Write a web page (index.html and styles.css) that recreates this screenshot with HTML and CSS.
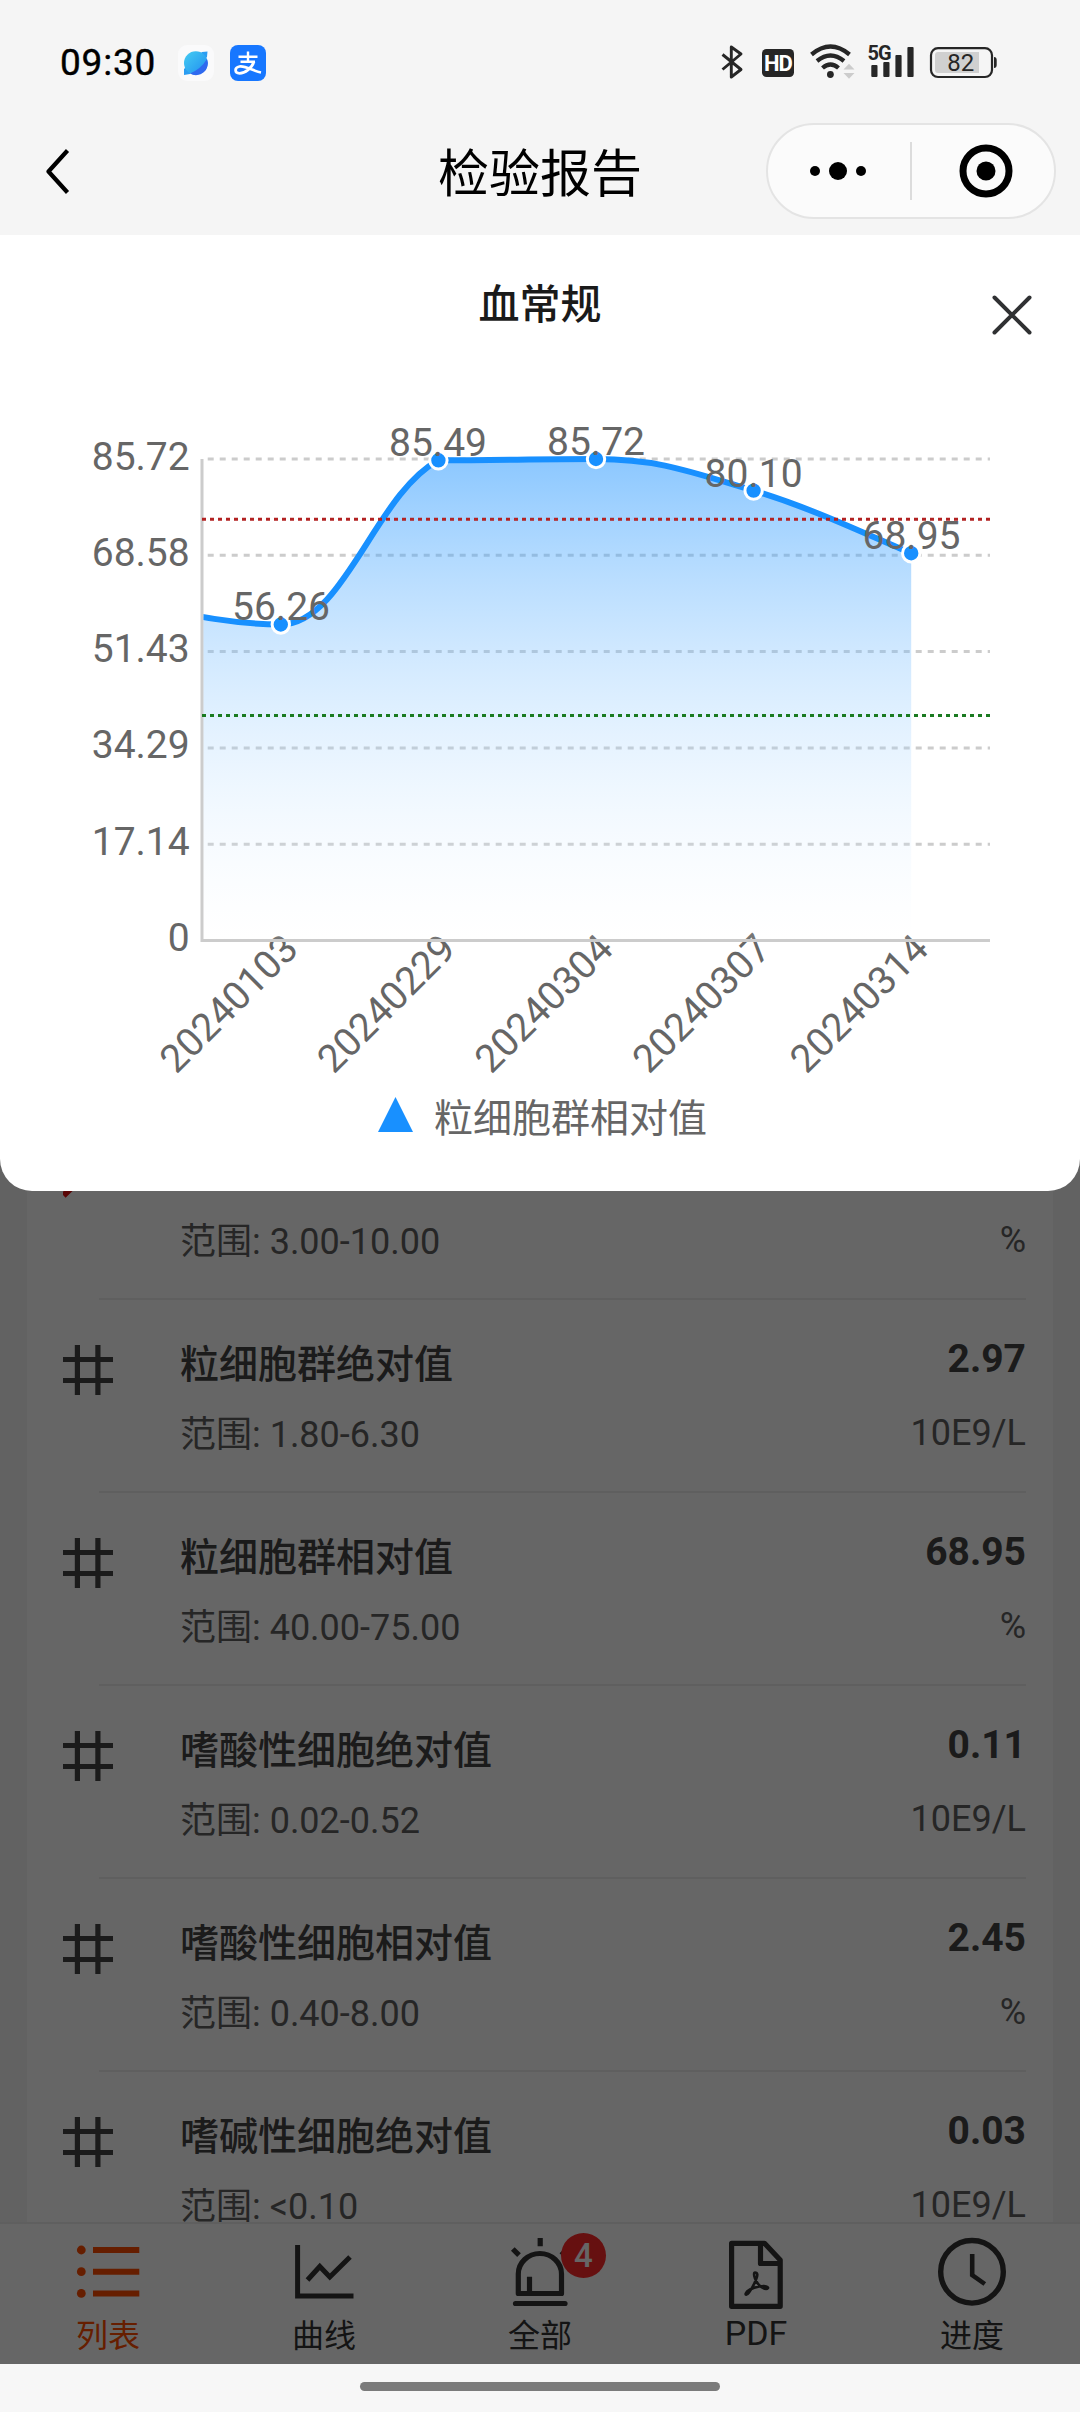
FILE: index.html
```html
<!DOCTYPE html>
<html lang="zh-CN">
<head>
<meta charset="utf-8">
<title>检验报告</title>
<link rel="stylesheet" href="styles.css">
</head>
<body>
<svg class="defs" width="0" height="0" aria-hidden="true">
  <symbol id="hash" viewBox="0 0 50 50"><path d="M14.4 0V50M34.9 0V50M0 14.5H50M0 35.5H50" fill="none" stroke="currentColor" stroke-width="5.2"/></symbol>
</svg>
<div class="screen">
  <header class="statusbar">
    <div class="status-left">
      <span class="clock">09:30</span>
      <svg class="app-icon" width="36" height="36" viewBox="0 0 36 36">
        <defs>
          <linearGradient id="planet" x1="0" y1="0" x2="1" y2="1"><stop offset="0" stop-color="#45cdf2"/><stop offset="1" stop-color="#1f8cf0"/></linearGradient>
        </defs>
        <rect width="36" height="36" rx="9" fill="#fafafb"/>
        <path d="M6 30 L6 24 L24 7 L29.500 6.500 L29 12 L12 29 Z" fill="#2b9df2"/>
        <circle cx="17.800" cy="18" r="11.800" fill="url(#planet)"/>
        <path d="M29 14 A11.800 11.800 0 0 1 12 28.500 Q23 24 29 14Z" fill="#2f69ef"/>
      </svg>
      <svg class="app-icon" width="36" height="36" viewBox="0 0 36 36">
        <rect width="36" height="36" rx="8" fill="#1777ff"/>
        <g fill="none" stroke="#fff">
          <path d="M8.500 11.800H27.500M18 6.500V16.500M10.500 16.800H25" stroke-width="2.400"/>
          <path d="M24 16.500C22 23 15 28.300 9.500 28.300C4.500 28.300 4 22.500 9.500 21.500C15.500 20.500 23 26 31 27.500" stroke-width="2.700"/>
        </g>
      </svg>
    </div>
    <svg class="status-icons" width="280" height="40" viewBox="720 42 280 40">
      <g fill="none" stroke="#262626">
        <path d="M722.500 54.500L741 69.500L731.300 77V47L741 54L722.500 69.500" stroke-width="2.900" stroke-linejoin="round"/>
        <path d="M811.500 54.500Q830.500 38.500 849.500 54.500M817 61Q830.500 50 844 61M822.500 68Q830.500 61 838.500 68" stroke-width="4.300"/>
        <rect x="931" y="48.200" width="61" height="28.800" rx="7" stroke-width="2.200"/>
      </g>
      <rect x="762" y="49" width="32" height="28" rx="4.500" fill="#262626"/>
      <text class="t-hd" x="778" y="70.500">HD</text>
      <circle cx="830.400" cy="74.500" r="3.400" fill="#262626"/>
      <path d="M843.500 69.500L849 63.800L854.500 69.500ZM843.500 73L849 78.700L854.500 73Z" fill="#cccccc"/>
      <text class="t-5g" x="879" y="60">5G</text>
      <g fill="#262626">
        <rect x="871.300" y="65" width="6.200" height="12" rx="1"/>
        <rect x="883.300" y="62" width="6.200" height="15" rx="1"/>
        <rect x="895.400" y="55" width="6.200" height="22" rx="1"/>
        <rect x="907.400" y="47" width="6.200" height="30" rx="1"/>
        <path d="M994 57Q996.700 57 996.700 60V65Q996.700 68 994 68Z"/>
      </g>
      <path d="M938 52H979V73H938Q935 73 935 70V55Q935 52 938 52Z" fill="#d0d0d0"/>
      <text class="t-batt" x="960.800" y="71">82</text>
    </svg>
  </header>
  <nav class="navbar">
    <svg class="back" width="24" height="46" viewBox="0 0 24 46"><path d="M21.500 1.500L2.500 22.500L21.500 43.500" fill="none" stroke="#000" stroke-width="4.200" stroke-linejoin="round"/></svg>
    <h1 class="nav-title">检验报告</h1>
    <div class="capsule">
      <svg width="56" height="20" viewBox="0 0 56 20"><circle cx="5" cy="10" r="5"/><circle cx="28" cy="10" r="9"/><circle cx="51" cy="10" r="5"/></svg>
      <span class="capsule-line"></span>
      <svg width="54" height="54" viewBox="0 0 54 54"><circle cx="27" cy="27" r="23" fill="none" stroke="#000" stroke-width="7"/><circle cx="27" cy="27" r="9.500"/></svg>
    </div>
  </nav>

  <div class="page">
    <main class="report">
      <ul class="card">
        <li class="row">
          <svg class="row-icon" width="50" height="50" viewBox="0 0 50 50"><path d="M0.500 43.500L30 15" fill="none" stroke="#e01010" stroke-width="6"/></svg>
          <div class="row-main"><span class="name"></span><span class="range">范围: 3.00-10.00</span></div>
          <div class="row-value"><span class="value"></span><span class="unit">%</span></div>
        </li>
        <li class="row">
          <svg class="row-icon" width="50" height="50"><use href="#hash"/></svg>
          <div class="row-main"><span class="name">粒细胞群绝对值</span><span class="range">范围: 1.80-6.30</span></div>
          <div class="row-value"><span class="value">2.97</span><span class="unit">10E9/L</span></div>
        </li>
        <li class="row">
          <svg class="row-icon" width="50" height="50"><use href="#hash"/></svg>
          <div class="row-main"><span class="name">粒细胞群相对值</span><span class="range">范围: 40.00-75.00</span></div>
          <div class="row-value"><span class="value">68.95</span><span class="unit">%</span></div>
        </li>
        <li class="row">
          <svg class="row-icon" width="50" height="50"><use href="#hash"/></svg>
          <div class="row-main"><span class="name">嗜酸性细胞绝对值</span><span class="range">范围: 0.02-0.52</span></div>
          <div class="row-value"><span class="value">0.11</span><span class="unit">10E9/L</span></div>
        </li>
        <li class="row">
          <svg class="row-icon" width="50" height="50"><use href="#hash"/></svg>
          <div class="row-main"><span class="name">嗜酸性细胞相对值</span><span class="range">范围: 0.40-8.00</span></div>
          <div class="row-value"><span class="value">2.45</span><span class="unit">%</span></div>
        </li>
        <li class="row">
          <svg class="row-icon" width="50" height="50"><use href="#hash"/></svg>
          <div class="row-main"><span class="name">嗜碱性细胞绝对值</span><span class="range">范围: &lt;0.10</span></div>
          <div class="row-value"><span class="value">0.03</span><span class="unit">10E9/L</span></div>
        </li>
      </ul>
    </main>

    <footer class="tabbar">
      <div class="tab active">
        <svg class="tab-icon" width="80" height="76" viewBox="68 2234 80 76"><g fill="currentColor"><circle cx="81.300" cy="2250" r="4.400"/><circle cx="81.300" cy="2271.700" r="4.400"/><circle cx="81.300" cy="2293.400" r="4.400"/><path d="M93 2247H139.300V2253H93ZM93 2268.700H139.300V2274.700H93ZM93 2290.400H139.300V2296.400H93Z"/></g></svg>
        <span>列表</span>
      </div>
      <div class="tab">
        <svg class="tab-icon" width="80" height="76" viewBox="284 2234 80 76"><path d="M297.600 2245V2296H353.500M307.500 2280L319.800 2266.500L329.800 2277L350 2257" fill="none" stroke="currentColor" stroke-width="5"/></svg>
        <span>曲线</span>
      </div>
      <div class="tab">
        <svg class="tab-icon" width="80" height="76" viewBox="500 2234 80 76"><g fill="none" stroke="currentColor" stroke-width="5.200"><path d="M518.300 2293.500V2274A21.600 20.500 0 0 1 561.500 2274V2293.500Z" stroke-linejoin="round"/><path d="M529.500 2276.700V2293M540.200 2238V2246.300M512.800 2249L519 2255.200M567.600 2249L561.400 2255.200"/><path d="M515.500 2303.500H565" stroke-linecap="round"/></g></svg>
        <span>全部</span>
        <b class="badge">4</b>
      </div>
      <div class="tab">
        <svg class="tab-icon" width="80" height="76" viewBox="716 2234 80 76"><g fill="none" stroke="currentColor" stroke-width="5.200" stroke-linejoin="round"><path d="M731.600 2243.300H764.500L780.200 2260V2306.300H731.600ZM760.500 2243.300V2263.500H780.200"/><path d="M755 2272.500C752.500 2272.500 755 2283 762 2287.500C768 2291 771 2286.500 764 2286C757.500 2286 750 2289 747 2291.500C744 2295 746.500 2296 749 2292.500C752 2288.500 757.500 2278 757.300 2274.500Q757 2272.500 755 2272.500Z" stroke-width="2.600"/></g></svg>
        <span class="latin">PDF</span>
      </div>
      <div class="tab">
        <svg class="tab-icon" width="80" height="76" viewBox="932 2234 80 76"><g fill="none" stroke="currentColor"><circle cx="972" cy="2271.800" r="31.300" stroke-width="5.400"/><path d="M972.200 2254V2275L984.800 2284" stroke-width="4.600"/></g></svg>
        <span>进度</span>
      </div>
    </footer>

    <div class="mask">
      <section class="sheet">
        <h2 class="sheet-title">血常规</h2>
        <svg class="close" width="40" height="40" viewBox="0 0 40 40"><path d="M2.500 2.500L37.500 37.500M37.500 2.500L2.500 37.500" stroke="#303133" stroke-width="4" stroke-linecap="round"/></svg>
        <svg class="chart" width="1080" height="680" viewBox="0 411 1080 680">
          <defs>
            <linearGradient id="area" gradientUnits="userSpaceOnUse" x1="0" y1="459" x2="0" y2="940.500"><stop offset="0" stop-color="#1890ff" stop-opacity=".5"/><stop offset="1" stop-color="#fff" stop-opacity=".1"/></linearGradient>
            <clipPath id="plot"><rect x="203.500" y="440" width="788" height="501"/></clipPath>
          </defs>
          <path d="M207.700 459H990M207.700 555.300H990M207.700 651.600H990M207.700 747.900H990M207.700 844.200H990" stroke="#ccc" stroke-width="3" stroke-dasharray="6 6"/>
          <g class="ylabels">
            <text x="189.700" y="470">85.72</text>
            <text x="189.700" y="566">68.58</text>
            <text x="189.700" y="662">51.43</text>
            <text x="189.700" y="758">34.29</text>
            <text x="189.700" y="855">17.14</text>
            <text x="189.700" y="950.500">0</text>
          </g>
          <g class="xlabels">
            <text transform="translate(176.300 1075) rotate(-45)">20240103</text>
            <text transform="translate(333.700 1075) rotate(-45)">20240229</text>
            <text transform="translate(491.300 1075) rotate(-45)">20240304</text>
            <text transform="translate(649 1075) rotate(-45)">20240307</text>
            <text transform="translate(806.500 1075) rotate(-45)">20240314</text>
          </g>
          <path d="M202 459V940.500M200.500 940.500H990" fill="none" stroke="#ccc" stroke-width="3"/>
          <g clip-path="url(#plot)">
            <path d="M123.200 601.500C154.700 606.100 217.800 624.500 280.800 624.500C343.800 624.500 375.400 493.400 438.400 460.300C501.400 460.300 533 459 596 459C659 459 690.600 471.800 753.600 490.600C816.600 509.400 879.700 540.700 911.200 553.200V939H123.200Z" fill="url(#area)"/>
            <path d="M123.200 601.500C154.700 606.100 217.800 624.500 280.800 624.500C343.800 624.500 375.400 493.400 438.400 460.300C501.400 460.300 533 459 596 459C659 459 690.600 471.800 753.600 490.600C816.600 509.400 879.700 540.700 911.200 553.200" fill="none" stroke="#1890ff" stroke-width="6"/>
          </g>
          <g fill="#1890ff" stroke="#fff" stroke-width="3">
            <circle cx="280.800" cy="624.500" r="8.700"/>
            <circle cx="438.400" cy="460.300" r="8.700"/>
            <circle cx="596" cy="459" r="8.700"/>
            <circle cx="753.600" cy="490.600" r="8.700"/>
            <circle cx="911.200" cy="553.200" r="8.700"/>
          </g>
          <g class="points">
            <text x="281" y="619.500">56.26</text>
            <text x="438" y="455.500">85.49</text>
            <text x="596" y="454.700">85.72</text>
            <text x="753.600" y="487">80.10</text>
            <text x="911.500" y="548.500">68.95</text>
          </g>
          <path d="M202 519.300H990" stroke="#b22222" stroke-width="3" stroke-dasharray="4 4"/>
          <path d="M202 715.600H990" stroke="#1a7a20" stroke-width="3" stroke-dasharray="4 4"/>
        </svg>
        <div class="legend">
          <svg width="35" height="35" viewBox="0 0 35 35"><path d="M17.500 0L35 35H0Z" fill="#1890ff"/></svg>
          <span>粒细胞群相对值</span>
        </div>
      </section>
    </div>
  </div>

  <div class="gesture"><span class="gesture-bar"></span></div>
</div>
</body>
</html>
```
FILE: styles.css
```css
* { box-sizing: border-box; }

body {
  margin: 0;
  background: #f5f5f5;
  font-family: Roboto, "Noto Sans CJK SC", sans-serif;
}

h1, h2, ul { margin: 0; padding: 0; font-weight: 400; }
svg { display: block; }
.defs { position: absolute; }

.screen {
  display: flex;
  flex-direction: column;
  width: 1080px;
  height: 2412px;
  overflow: hidden;
}

/* status bar */
.statusbar {
  display: flex;
  justify-content: space-between;
  height: 110px;
  padding: 42px 80px 0 60px;
}
.status-left { display: flex; padding-top: 3px; }
.clock {
  width: 118px;
  font-size: 37px;
  line-height: 36px;
  letter-spacing: .8px;
  -webkit-text-stroke: .4px #000;
  color: #000;
}
.app-icon { margin-right: 16px; }
.status-icons text { font-family: Roboto, sans-serif; text-anchor: middle; }
.t-hd { font-size: 22px; font-weight: 700; fill: #fff; letter-spacing: -1px; }
.t-5g { font-size: 20px; font-weight: 700; fill: #262626; letter-spacing: -1px; }
.t-batt { font-size: 24px; fill: #262626; }

/* navigation bar */
.navbar {
  display: grid;
  grid-template-columns: 314px 1fr 314px;
  align-items: start;
  height: 125px;
  padding-top: 13px;
}
.back { margin: 26px 0 0 46px; }
.nav-title {
  padding-top: 3px;
  font-size: 51px;
  line-height: 98px;
  text-align: center;
  color: #000;
}
.capsule {
  display: flex;
  align-items: center;
  width: 290px;
  height: 96px;
  padding: 0 41px 0 42px;
  border: 2px solid #e4e4e4;
  border-radius: 49px;
  background: #fbfbfb;
}
.capsule-line {
  width: 2px;
  height: 58px;
  margin: 0 47px 0 44px;
  background: #dcdcdc;
}
.capsule svg { flex: none; }

/* report list */
.page {
  position: relative;
  display: flex;
  flex-direction: column;
  height: 2129px;
}
.report {
  height: 1987px;
  padding: 0 27px;
  overflow: hidden;
}
.card {
  padding-top: 871px;
  background: #fff;
  list-style: none;
}
.row {
  display: flex;
  position: relative;
  height: 193px;
  padding: 0 27px 0 36px;
}
.row::after {
  content: "";
  position: absolute;
  left: 72px;
  right: 27px;
  bottom: -1px;
  height: 2px;
  background: #ededed;
}
.row-icon { margin: 46px 67px 0 0; color: #444; }
.row-main, .row-value { display: flex; flex-direction: column; }
.row-main { flex: 1; padding-top: 36px; }
.row-value { padding-top: 30px; align-items: flex-end; }
.name, .value { height: 60px; font-size: 39px; line-height: 60px; color: #444; }
.name { font-weight: 500; }
.value { font-weight: 700; }
.range, .unit { font-size: 36px; line-height: 50px; color: #606060; }
.range { margin-top: 15px; }
.unit { margin-top: 19px; }

/* bottom tabs */
.tabbar {
  display: flex;
  height: 142px;
  border-top: 2px solid #ededed;
  background: #fff;
}
.tab {
  position: relative;
  display: flex;
  flex: 1;
  flex-direction: column;
  align-items: center;
  padding-top: 10px;
  font-size: 32px;
  line-height: 40px;
  color: #333;
}
.tab-icon { margin-bottom: 6px; }
.tab .latin { margin-top: -3px; font-size: 34px; }
.tab.active { color: #ff4d00; }
.badge {
  position: absolute;
  left: 129px;
  top: 9px;
  width: 45px;
  height: 45px;
  border-radius: 50%;
  background: #ff2a2a;
  color: #fff;
  font-size: 33px;
  font-weight: 500;
  line-height: 45px;
  text-align: center;
}

/* chart sheet */
.mask {
  position: absolute;
  inset: 0;
  background: rgba(0, 0, 0, .6);
}
.sheet {
  position: relative;
  display: flex;
  flex-direction: column;
  align-items: center;
  height: 956px;
  border-radius: 0 0 32px 32px;
  background: #fff;
}
.sheet-title {
  padding-top: 40px;
  font-size: 41px;
  font-weight: 500;
  line-height: 60px;
  color: #1a1a1a;
}
.close { position: absolute; left: 992px; top: 60px; }
.chart { margin-top: 76px; flex: none; }
.chart text { font-size: 39px; fill: #666; }
.ylabels { text-anchor: end; }
.points { text-anchor: middle; }
.legend {
  display: flex;
  gap: 21px;
  height: 60px;
  margin-top: -2px;
  padding-left: 5px;
  font-size: 39px;
  line-height: 60px;
  color: #666;
}
.legend svg { margin-top: 8px; }

/* system gesture area */
.gesture {
  display: flex;
  justify-content: center;
  height: 48px;
  padding-top: 18px;
  background: #f7f7f7;
}
.gesture-bar { width: 360px; height: 9px; border-radius: 5px; background: #7b7b7b; }
```
